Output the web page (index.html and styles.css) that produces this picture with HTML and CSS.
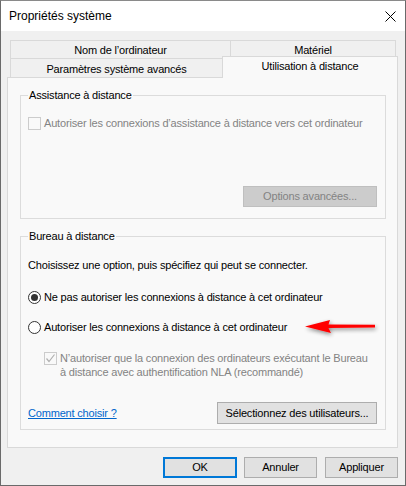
FILE: index.html
```html
<!DOCTYPE html>
<html lang="fr">
<head>
<meta charset="utf-8">
<title>Propriétés système</title>
<link rel="stylesheet" href="styles.css">
</head>
<body>
<div class="window">
  <div class="titlebar">
    <span class="title">Propriétés système</span>
    <svg class="close" width="11" height="11" viewBox="0 0 11 11"><path d="M0.5 0.5 L10.5 10.5 M10.5 0.5 L0.5 10.5" stroke="#000" stroke-width="1" fill="none"/></svg>
  </div>
  <div class="body">
    <div class="tabs">
      <div class="tabrow row1">
        <div class="tab t-nom">Nom de l’ordinateur</div>
        <div class="tab t-mat">Matériel</div>
      </div>
      <div class="tabrow row2">
        <div class="tab t-param">Paramètres système avancés</div>
        <div class="tab t-sel">Utilisation à distance</div>
      </div>
    </div>
    <div class="panel">
      <div class="group group1">
        <div class="gtitle">Assistance à distance</div>
        <div class="optrow disabled first">
          <span class="check"></span>
          <span class="label">Autoriser les connexions d’assistance à distance vers cet ordinateur</span>
        </div>
        <div class="btnrow">
          <div class="btn btn-disabled btn-options">Options avancées...</div>
        </div>
      </div>
      <div class="group group2">
        <div class="gtitle">Bureau à distance</div>
        <div class="intro">Choisissez une option, puis spécifiez qui peut se connecter.</div>
        <div class="optrow radio1">
          <span class="radio checked"></span>
          <span class="label">Ne pas autoriser les connexions à distance à cet ordinateur</span>
        </div>
        <div class="optrow radio2">
          <span class="radio"></span>
          <span class="label">Autoriser les connexions à distance à cet ordinateur</span>
        </div>
        <div class="optrow nla disabled">
          <span class="check checked">
            <svg width="11" height="11" viewBox="0 0 11 11"><path d="M1.5 5.5 L4 8.5 L9.5 1.5" stroke="#b0b0b0" stroke-width="1.2" fill="none"/></svg>
          </span>
          <span class="label">N’autoriser que la connexion des ordinateurs exécutant le Bureau<br>à distance avec authentification NLA (recommandé)</span>
        </div>
        <div class="bottomrow">
          <a class="link" href="#">Comment choisir ?</a>
          <div class="btn btn-users">Sélectionnez des utilisateurs...</div>
        </div>
      </div>
    </div>
    <div class="buttons">
      <div class="btn btn-ok">OK</div>
      <div class="btn btn-cancel">Annuler</div>
      <div class="btn btn-apply">Appliquer</div>
    </div>
  </div>
  <svg class="arrow" width="90" height="30" viewBox="0 0 90 30">
    <defs>
      <filter id="sh" x="-20%" y="-50%" width="140%" height="200%">
        <feGaussianBlur in="SourceAlpha" stdDeviation="2"/>
        <feOffset dx="1" dy="2" result="b"/>
        <feComponentTransfer><feFuncA type="linear" slope="0.45"/></feComponentTransfer>
        <feMerge><feMergeNode/><feMergeNode in="SourceGraphic"/></feMerge>
      </filter>
    </defs>
    <path filter="url(#sh)" fill="#ff0000" d="M5 13.5 L30 7 L28.5 11.6 L75 11.8 L75 14.6 L28.5 15 L31 20 Z"/>
  </svg>
</div>
</body>
</html>
```
FILE: styles.css
```css
* {
  box-sizing: border-box;
  margin: 0;
  padding: 0;
}

html, body {
  margin: 0;
  width: 406px;
  height: 486px;
  overflow: hidden;
  background: #f0f0f0;
}

body {
  font-family: "Liberation Sans", Arial, sans-serif;
  font-size: 11px;
  letter-spacing: -0.18px;
  color: #000;
}

.window {
  position: relative;
  width: 406px;
  height: 486px;
  border: 1px solid #6a6a6a;
  border-top-color: #8a8a8a;
  background: #f0f0f0;
  display: flex;
  flex-direction: column;
}

.titlebar {
  height: 30px;
  background: #fff;
  display: flex;
  align-items: center;
  justify-content: space-between;
  padding: 0 9px 0 8px;
}

.title {
  font-family: "Liberation Sans", Arial, sans-serif;
  font-size: 12px;
  letter-spacing: 0;
  line-height: 16px;
  color: #000;
}

.close {
  display: block;
}

.body {
  flex: 1;
  display: flex;
  flex-direction: column;
  padding-top: 9px;
}

.tabs {
  margin-left: 9px;
}

.tabrow {
  display: flex;
  align-items: flex-end;
}

.row1 {
  height: 18px;
}

.row2 {
  height: 19px;
}

.tab {
  border: 1px solid #d9d9d9;
  border-bottom: none;
  background: #f0f0f0;
  text-align: center;
  line-height: 13px;
  white-space: nowrap;
}

.row1 .tab {
  height: 18px;
  padding-top: 3px;
}

.t-nom {
  width: 221px;
}

.t-mat {
  width: 166px;
  margin-left: -1px;
}

.t-param {
  width: 213px;
  height: 19px;
  padding-top: 4px;
}

.t-sel {
  position: relative;
  z-index: 1;
  width: 176px;
  height: 22px;
  margin-left: -1px;
  margin-bottom: -1px;
  padding-top: 3px;
  background: #f9f9f9;
}

.panel {
  margin-left: 6px;
  width: 391px;
  height: 371px;
  border: 1px solid #d9d9d9;
  background: #f9f9f9;
  padding: 17px 0 0 12px;
}

.group {
  width: 366px;
  border: 1px solid #dcdcdc;
  display: flex;
  flex-direction: column;
  padding-left: 7px;
}

.group1 {
  height: 124px;
}

.group2 {
  height: 194px;
  margin-top: 17px;
}

.gtitle {
  align-self: flex-start;
  margin-top: -7px;
  line-height: 13px;
  height: 13px;
  padding: 0 1px;
  background: #f9f9f9;
}

.optrow {
  display: flex;
  align-items: flex-start;
  line-height: 13px;
}

.optrow .label {
  margin-left: 3px;
}

.disabled {
  color: #838383;
}

.first {
  margin-top: 15px;
}

.check {
  width: 13px;
  height: 13px;
  border: 1px solid #cccccc;
  background: #f9f9f9;
  flex: none;
  display: flex;
  align-items: center;
  justify-content: center;
}

.radio {
  width: 13px;
  height: 13px;
  border: 1px solid #333;
  border-radius: 50%;
  background: #fff;
  flex: none;
  display: flex;
  align-items: center;
  justify-content: center;
}

.radio.checked::after {
  content: "";
  width: 7px;
  height: 7px;
  border-radius: 50%;
  background: #333;
}

.btnrow {
  display: flex;
  justify-content: flex-end;
  margin-top: 56px;
  padding-right: 8px;
}

.btn {
  height: 21px;
  border: 1px solid #adadad;
  background: #e1e1e1;
  display: flex;
  align-items: center;
  justify-content: center;
  line-height: 13px;
  white-space: nowrap;
  color: #000;
}

.btn-disabled {
  background: #cccccc;
  border-color: #bfbfbf;
  color: #838383;
}

.btn-options {
  width: 134px;
}

.intro {
  margin-top: 16px;
  line-height: 13px;
}

.radio1 {
  margin-top: 19px;
}

.radio2 {
  margin-top: 17px;
}

.nla {
  margin-top: 17px;
  padding-left: 16px;
  line-height: 14px;
}

.nla .check {
  margin-top: 1px;
}

.bottomrow {
  display: flex;
  align-items: center;
  justify-content: space-between;
  margin-top: 23px;
  padding-right: 8px;
}

.link {
  color: #0066cc;
  text-decoration: underline;
  line-height: 13px;
}

.btn-users {
  width: 160px;
  height: 22px;
}

.buttons {
  display: flex;
  justify-content: flex-end;
  margin-top: 9px;
  margin-right: 7px;
}

.btn-ok {
  width: 74px;
  border: 2px solid #0078d7;
}

.btn-cancel {
  width: 73px;
  margin-left: 7px;
}

.btn-apply {
  width: 73px;
  margin-left: 8px;
}

.arrow {
  position: absolute;
  left: 299px;
  top: 312px;
}
```
